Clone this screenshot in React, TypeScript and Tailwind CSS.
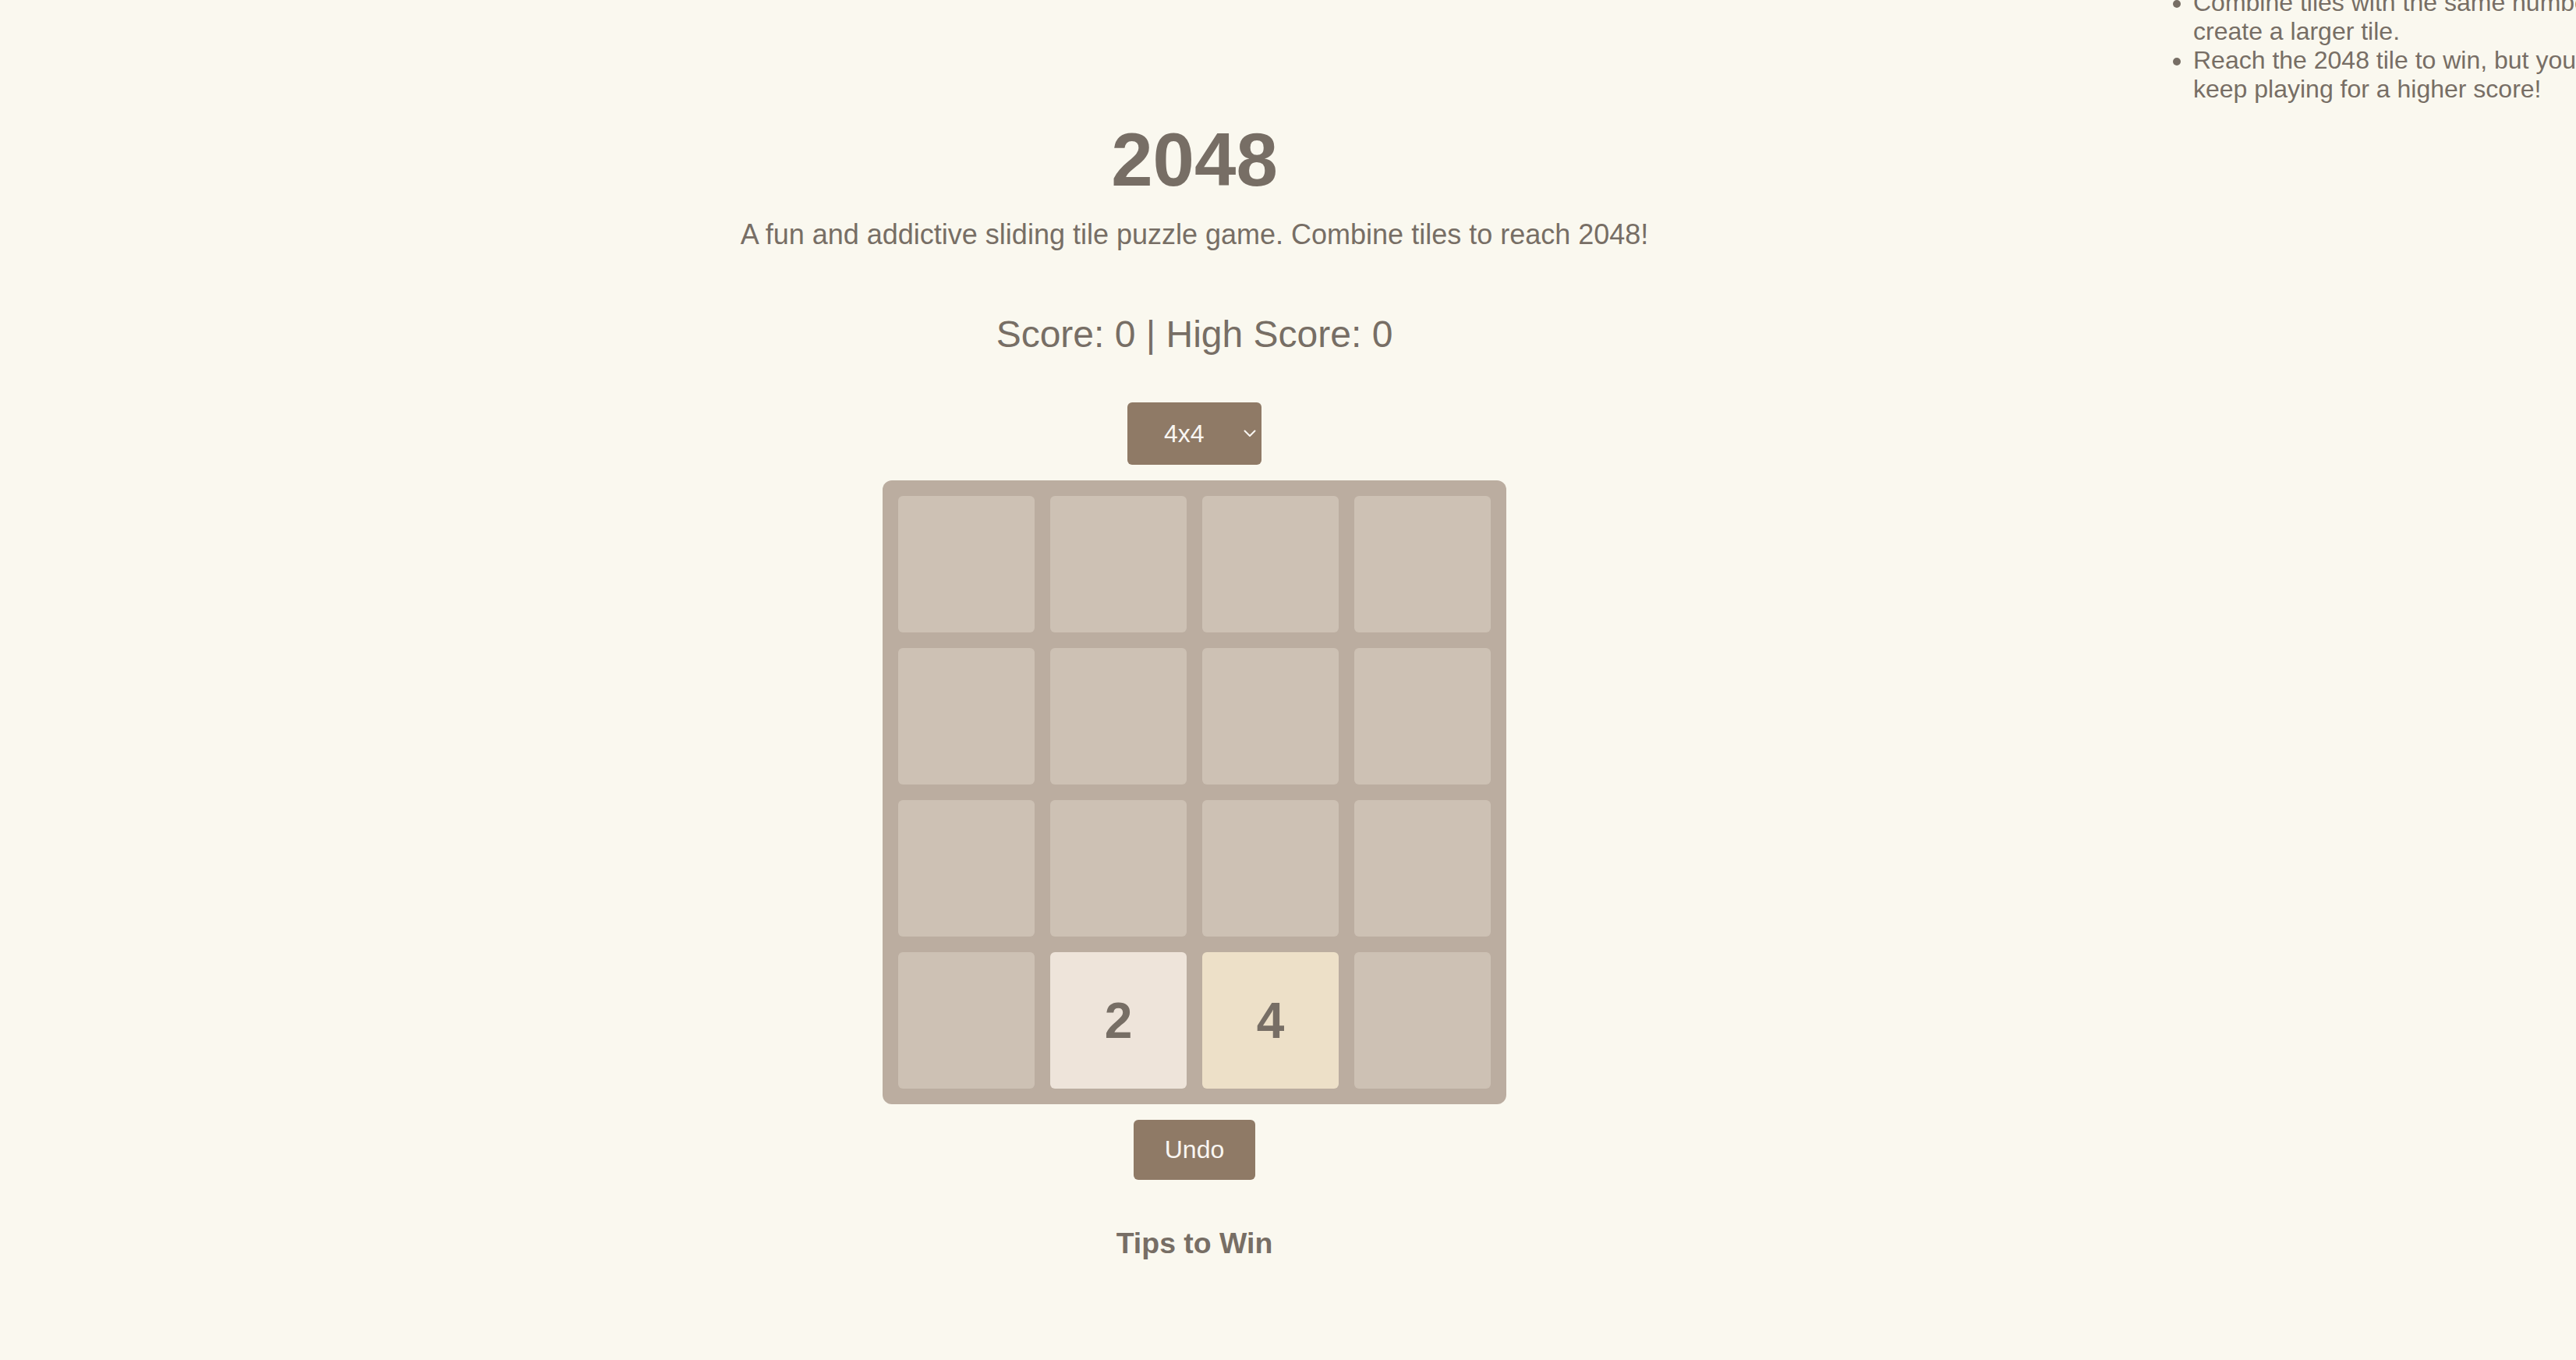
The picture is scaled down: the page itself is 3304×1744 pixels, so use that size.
import React from "react";

const tileColor = (v: number) => {
  if (v === 2) return "bg-[#eee4da]";
  if (v === 4) return "bg-[#ede0c8]";
  return "bg-[#cdc1b4]";
};

export default function App() {
  const grid = [
    [0, 0, 0, 0],
    [0, 0, 0, 0],
    [0, 0, 0, 0],
    [0, 2, 4, 0],
  ];
  return (
    <div className="relative h-[1744px] w-full overflow-hidden bg-[#faf8ef] font-['Liberation_Sans',Arial,sans-serif] text-[#776e65]">
      <main className="flex w-[3064px] flex-col items-center pt-[150px]">
        <h1 className="text-[96px] font-bold leading-[110px]">2048</h1>
        <p className="mt-[20px] text-[36px] leading-[41px]">
          A fun and addictive sliding tile puzzle game. Combine tiles to reach 2048!
        </p>
        <div className="mt-[80px] text-[48px] leading-[55px]">Score: 0 | High Score: 0</div>
        <div className="mt-[60px] flex h-[80px] w-[172px] items-center justify-between rounded-[6px] bg-[#8f7a66] pl-[47px] pr-[7px] text-[32px] leading-[37px] text-[#f9f6f2]">
          <span>4x4</span>
          <svg width="16" height="10" viewBox="0 0 16 10" fill="none">
            <path d="M1.5 1.5 L8 8 L14.5 1.5" stroke="#f9f6f2" strokeWidth="2" strokeLinecap="round" strokeLinejoin="round" />
          </svg>
        </div>
        <div className="mt-[20px] grid grid-cols-4 gap-[20px] rounded-[12px] bg-[#bbada0] p-[20px]">
          {grid.flat().map((v, i) => (
            <div
              key={i}
              className={`flex h-[175px] w-[175px] items-center justify-center rounded-[6px] text-[64px] font-bold ${tileColor(v)}`}
            >
              {v !== 0 ? v : ""}
            </div>
          ))}
        </div>
        <button className="mt-[20px] rounded-[6px] bg-[#8f7a66] px-[40px] py-[20px] text-[32px] leading-[37px] text-[#f9f6f2]">
          Undo
        </button>
        <h3 className="mt-[60px] text-[37.44px] font-bold leading-[43px]">Tips to Win</h3>
      </main>
      <ul className="absolute left-[2733px] top-[-15px] w-[680px] list-disc pl-[80px] text-[32px] leading-[37px]">
        <li>Combine tiles with the same number to create a larger tile.</li>
        <li>Reach the 2048 tile to win, but you can keep playing for a higher score!</li>
      </ul>
    </div>
  );
}
